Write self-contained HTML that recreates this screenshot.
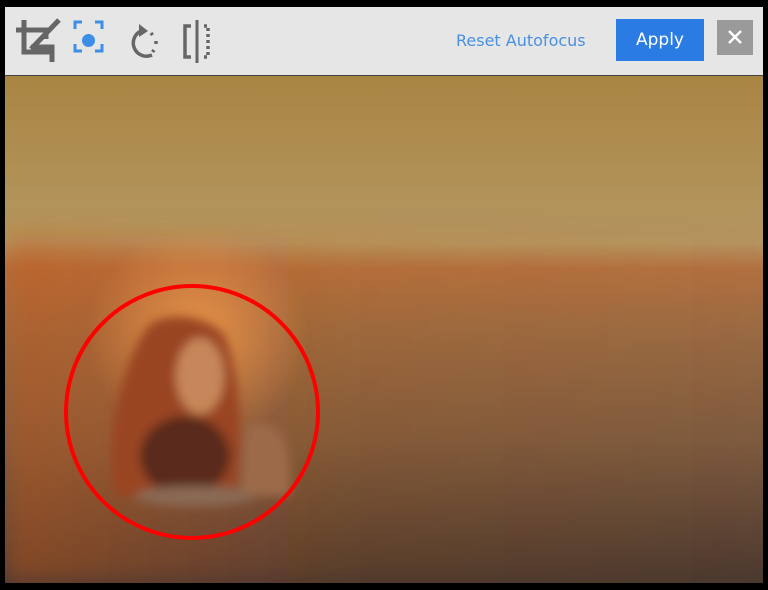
<!DOCTYPE html>
<html><head><style>
html,body{margin:0;padding:0;background:#000;width:768px;height:590px;overflow:hidden}
#bar{position:absolute;left:5px;top:7px;width:758px;height:68px;background:#e6e6e6;border-bottom:1px solid #444}
#img{position:absolute;left:5px;top:76px;width:758px;height:507px}
.t{position:absolute;font-family:"DejaVu Sans","Liberation Sans",sans-serif}
</style></head><body>
<div id="bar">
<svg width="220" height="68" style="position:absolute;left:0;top:0">
 <g fill="none" stroke="#666" stroke-width="5">
  <path d="M19 13V45H49M26 40H47V55M11 23H41V32M54 13L26 42"/>
 </g>
 <g fill="none" stroke="#3d8ee6" stroke-width="3">
  <path d="M70 22V15H77M90 15H97V22M97 37V44H90M77 44H70V37"/>
 </g>
 <circle cx="83.5" cy="33.5" r="6.5" fill="#3d8ee6"/>
 <path d="M136 24A11 11 0 1 0 147 48" fill="none" stroke="#666" stroke-width="3.5"/>
 <path d="M134 17L143 24L134 30Z" fill="#666"/>
 <g stroke="#666" stroke-width="3.5" fill="none" stroke-linecap="butt"><path d="M146 26l1.5 2M151 34v3M149 43l-1.5 2"/></g>
 <path d="M186 19H180V50H186" fill="none" stroke="#666" stroke-width="3.5"/>
 <path d="M192 13V56" stroke="#666" stroke-width="3"/>
 <path d="M199 19H203V50H199" fill="none" stroke="#666" stroke-width="3.5" stroke-dasharray="3 3"/>
</svg>
<div class="t" style="left:451px;top:24px;font-size:16px;color:#4a90e2">Reset Autofocus</div>
<div style="position:absolute;left:611px;top:12px;width:88px;height:42px;background:#2b7be4"></div>
<div class="t" style="left:611px;top:23px;width:88px;text-align:center;font-size:17px;color:#fff">Apply</div>
<div style="position:absolute;left:712px;top:13px;width:36px;height:35px;background:#9a9a9a"></div>
<svg width="36" height="35" style="position:absolute;left:712px;top:13px"><path d="M12 11L24 23M24 11L12 23" stroke="#fff" stroke-width="2.5"/></svg>
</div>
<div id="img">
<svg width="758" height="507">
 <defs>
  <linearGradient id="g" x1="0" y1="0" x2="0" y2="1">
   <stop offset="0" stop-color="#a98543"/>
   <stop offset="0.25" stop-color="#b2935a"/>
   <stop offset="0.33" stop-color="#b5935e"/>
   <stop offset="0.38" stop-color="#b27040"/>
   <stop offset="0.5" stop-color="#9a6a42"/>
   <stop offset="0.72" stop-color="#7d5a3e"/>
   <stop offset="1" stop-color="#4a382e"/>
  </linearGradient>
  <linearGradient id="h" x1="0" y1="0" x2="1" y2="0">
   <stop offset="0" stop-color="#c4581c" stop-opacity="0.45"/>
   <stop offset="0.45" stop-color="#c4581c" stop-opacity="0.1"/>
   <stop offset="1" stop-color="#c4581c" stop-opacity="0"/>
  </linearGradient>
  <radialGradient id="glow" cx="0.5" cy="0.5" r="0.5">
   <stop offset="0" stop-color="#f0984a" stop-opacity="0.9"/>
   <stop offset="1" stop-color="#f0984a" stop-opacity="0"/>
  </radialGradient>
  <filter id="b"><feGaussianBlur stdDeviation="5"/></filter>
  <filter id="b2"><feGaussianBlur stdDeviation="12"/></filter>
 </defs>
 <rect width="758" height="507" fill="url(#g)"/>
 <rect y="160" width="758" height="347" fill="url(#h)" filter="url(#b2)"/>
 <circle cx="192" cy="260" r="110" fill="url(#glow)"/>
 <g filter="url(#b)">
  <path d="M140 255C150 235 200 235 220 260C235 300 240 360 230 420H110C100 380 110 300 140 255Z" fill="#9a4420"/>
  <ellipse cx="180" cy="380" rx="45" ry="40" fill="#5a2a1c"/>
  <ellipse cx="195" cy="300" rx="24" ry="38" fill="#c8875a"/>
  <path d="M240 350C270 340 290 360 285 420H235Z" fill="#9c6a4a"/>
  <ellipse cx="190" cy="420" rx="60" ry="10" fill="#8a6a55"/>
 </g>
 <circle cx="187" cy="336" r="126" fill="none" stroke="#ff0000" stroke-width="4"/>
</svg>
</div>
</body></html>
